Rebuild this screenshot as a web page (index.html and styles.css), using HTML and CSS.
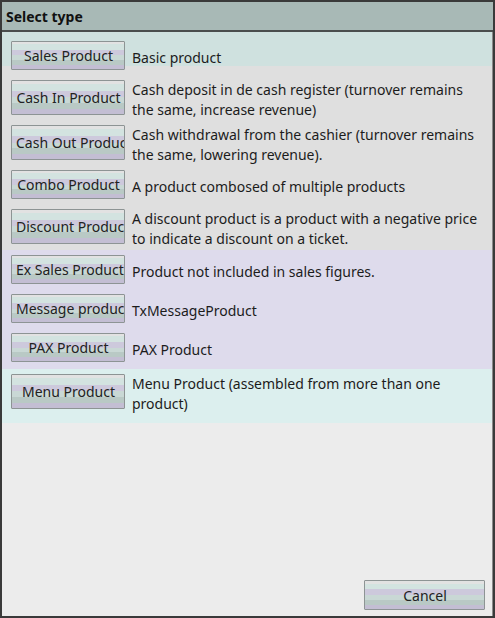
FILE: index.html
```html
<!DOCTYPE html>
<html lang="en">
<head>
  <meta charset="UTF-8">
  <title>Select type</title>
  <link rel="stylesheet" href="styles.css">
</head>
<body>
  <div class="window">
    <div class="titlebar">Select type</div>
    <div class="content">
      <div class="list">
        <div class="group group-sales">
          <div class="row">
            <button class="btn"><span>Sales Product</span></button>
            <div class="desc">Basic product</div>
          </div>
        </div>
        <div class="group group-cash">
          <div class="row">
            <button class="btn"><span>Cash In Product</span></button>
            <div class="desc">Cash deposit in de cash register (turnover remains<br>the same, increase revenue)</div>
          </div>
          <div class="row">
            <button class="btn"><span>Cash Out Product</span></button>
            <div class="desc">Cash withdrawal from the cashier (turnover remains<br>the same, lowering revenue).</div>
          </div>
          <div class="row">
            <button class="btn"><span>Combo Product</span></button>
            <div class="desc">A product combosed of multiple products</div>
          </div>
          <div class="row">
            <button class="btn"><span>Discount Product</span></button>
            <div class="desc">A discount product is a product with a negative price<br>to indicate a discount on a ticket.</div>
          </div>
        </div>
        <div class="group group-ex">
          <div class="row">
            <button class="btn"><span>Ex Sales Product</span></button>
            <div class="desc">Product not included in sales figures.</div>
          </div>
          <div class="row">
            <button class="btn"><span>Message product</span></button>
            <div class="desc">TxMessageProduct</div>
          </div>
          <div class="row">
            <button class="btn"><span>PAX Product</span></button>
            <div class="desc">PAX Product</div>
          </div>
        </div>
        <div class="group group-menu">
          <div class="row">
            <button class="btn"><span>Menu Product</span></button>
            <div class="desc">Menu Product (assembled from more than one<br>product)</div>
          </div>
        </div>
      </div>
      <div class="footer">
        <button class="btn btn-cancel"><span>Cancel</span></button>
      </div>
    </div>
  </div>
</body>
</html>
```

FILE: styles.css
```css
body {
  margin: 0;
  padding: 0;
  background-color: #3a3a3a;
  font-family: "Noto Sans", "Open Sans", sans-serif;
  font-size: 14px;
  color: #1c1c1c;
}

.window {
  width: 495px;
  height: 618px;
  box-sizing: border-box;
  border: 2px solid #3a3a3a;
  display: flex;
  flex-direction: column;
}

.titlebar {
  height: 28px;
  line-height: 30px;
  padding-left: 4px;
  background-color: #a8b9b6;
  border-bottom: 2px solid #4a4d4d;
  font-weight: bold;
  font-size: 14px;
  color: #111;
}

.content {
  flex: 1;
  display: flex;
  flex-direction: column;
  background-color: #ececec;
  border-right: 1px solid #8a8a8a;
}

.group-sales {
  background-color: #cfe1df;
  padding-top: 4px;
  margin-bottom: -9px;
}

.group-cash {
  background-color: #dfdfdf;
  padding: 9px 0 1px;
}

.group-ex {
  background-color: #dedbec;
  padding-bottom: 2px;
}

.group-menu {
  background-color: #dcefee;
  padding-bottom: 9px;
}

.row {
  display: flex;
  min-height: 39px;
}

.btn {
  display: flex;
  align-items: center;
  overflow: hidden;
  white-space: nowrap;
  box-sizing: border-box;
  padding: 0 3px 0 4px;
  border: 1px solid #8d9494;
  border-radius: 1px;
  font-family: inherit;
  font-size: 14px;
  color: #222;
  background: linear-gradient(to bottom,
    #e2e2e2 0, #e2e2e2 9%,
    #d3e3e0 9%, #d3e3e0 30%,
    #cdc9dc 30%, #cdc9dc 50%,
    #c9d8d5 50%, #c9d8d5 68%,
    #b9c9c5 68%, #b9c9c5 86%,
    #c3bed3 86%);
}

.btn span {
  margin: 0 auto;
}

.row .btn {
  flex: none;
  width: 114px;
  margin: 5px 7px 5px 9px;
}

.desc {
  flex: 1;
  align-self: center;
  padding: 5px 4px 1px 0;
  line-height: 19.5px;
  white-space: nowrap;
}

.footer {
  margin-top: auto;
  display: flex;
  justify-content: flex-end;
  padding: 0 7px 6px 0;
}

.btn-cancel {
  width: 121px;
  height: 30px;
}
```
